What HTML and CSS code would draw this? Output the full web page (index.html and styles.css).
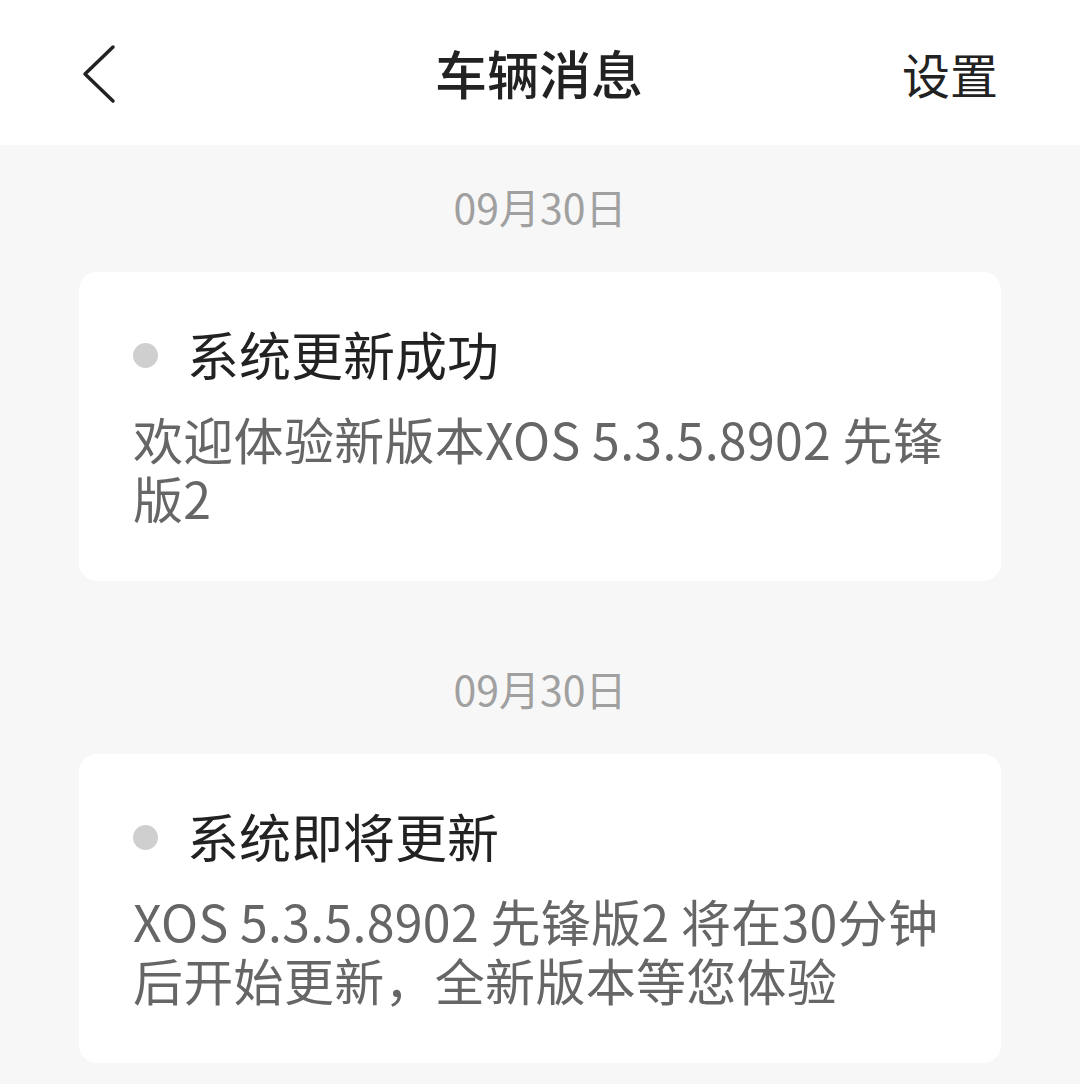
FILE: index.html
```html
<!DOCTYPE html>
<html lang="zh-CN">
<head>
<meta charset="UTF-8">
<meta name="viewport" content="width=device-width, initial-scale=1.0">
<title>车辆消息</title>
<link rel="stylesheet" href="styles.css">
</head>
<body>
<div class="header">
  <a class="back" href="#">
    <svg width="40" height="60" viewBox="0 0 40 60">
      <polyline points="33,3 5,30 33,57" fill="none" stroke="#222" stroke-width="3.5" stroke-linecap="round" stroke-linejoin="round"/>
    </svg>
  </a>
  <h1>车辆消息</h1>
  <a class="settings" href="#">设置</a>
</div>

<div class="list">
  <div class="group">
    <div class="date">09月30日</div>
    <div class="card">
      <div class="card-title"><span class="dot"></span>系统更新成功</div>
      <p class="card-text">欢迎体验新版本XOS 5.3.5.8902 先锋版2</p>
    </div>
  </div>

  <div class="group">
    <div class="date">09月30日</div>
    <div class="card">
      <div class="card-title"><span class="dot"></span>系统即将更新</div>
      <p class="card-text">XOS 5.3.5.8902 先锋版2 将在30分钟后开始更新，全新版本等您体验</p>
    </div>
  </div>
</div>
</body>
</html>
```

FILE: styles.css
```css
body {
  font-family: "Noto Sans CJK SC", "Noto Sans", sans-serif;
  background-color: #f7f7f7;
  margin: 0;
  color: #222;
}
.header {
  height: 145px;
  background: #fff;
  display: grid;
  grid-template-columns: 1fr auto 1fr;
  align-items: center;
  padding: 0 82px 0 80px;
}
.back {
  display: flex;
  align-items: center;
  justify-self: start;
  margin-top: 2px;
}
.header h1 {
  margin: 0;
  font-size: 52px;
  font-weight: 500;
  line-height: 60px;
  color: #222;
}
.settings {
  justify-self: end;
  font-size: 48px;
  line-height: 60px;
  color: #222;
  text-decoration: none;
}
.list {
  padding: 0 79px;
}
.group + .group {
  margin-top: 46px;
}
.date {
  padding-top: 36px;
  line-height: 50px;
  font-size: 41px;
  color: #a0a0a0;
  text-align: center;
}
.card {
  margin-top: 41px;
  background: #fff;
  border-radius: 18px;
  padding: 52px 54px 54px 54px;
}
.card-title {
  display: flex;
  align-items: center;
  font-size: 52px;
  line-height: 60px;
  color: #222;
}
.dot {
  width: 25px;
  height: 25px;
  border-radius: 50%;
  background: #cfcfcf;
  margin: 3px 29px 0 0;
  flex: none;
}
.card-text {
  margin: 25px 0 0;
  font-size: 50px;
  line-height: 59px;
  color: #666;
  letter-spacing: 0.3px;
}
```
